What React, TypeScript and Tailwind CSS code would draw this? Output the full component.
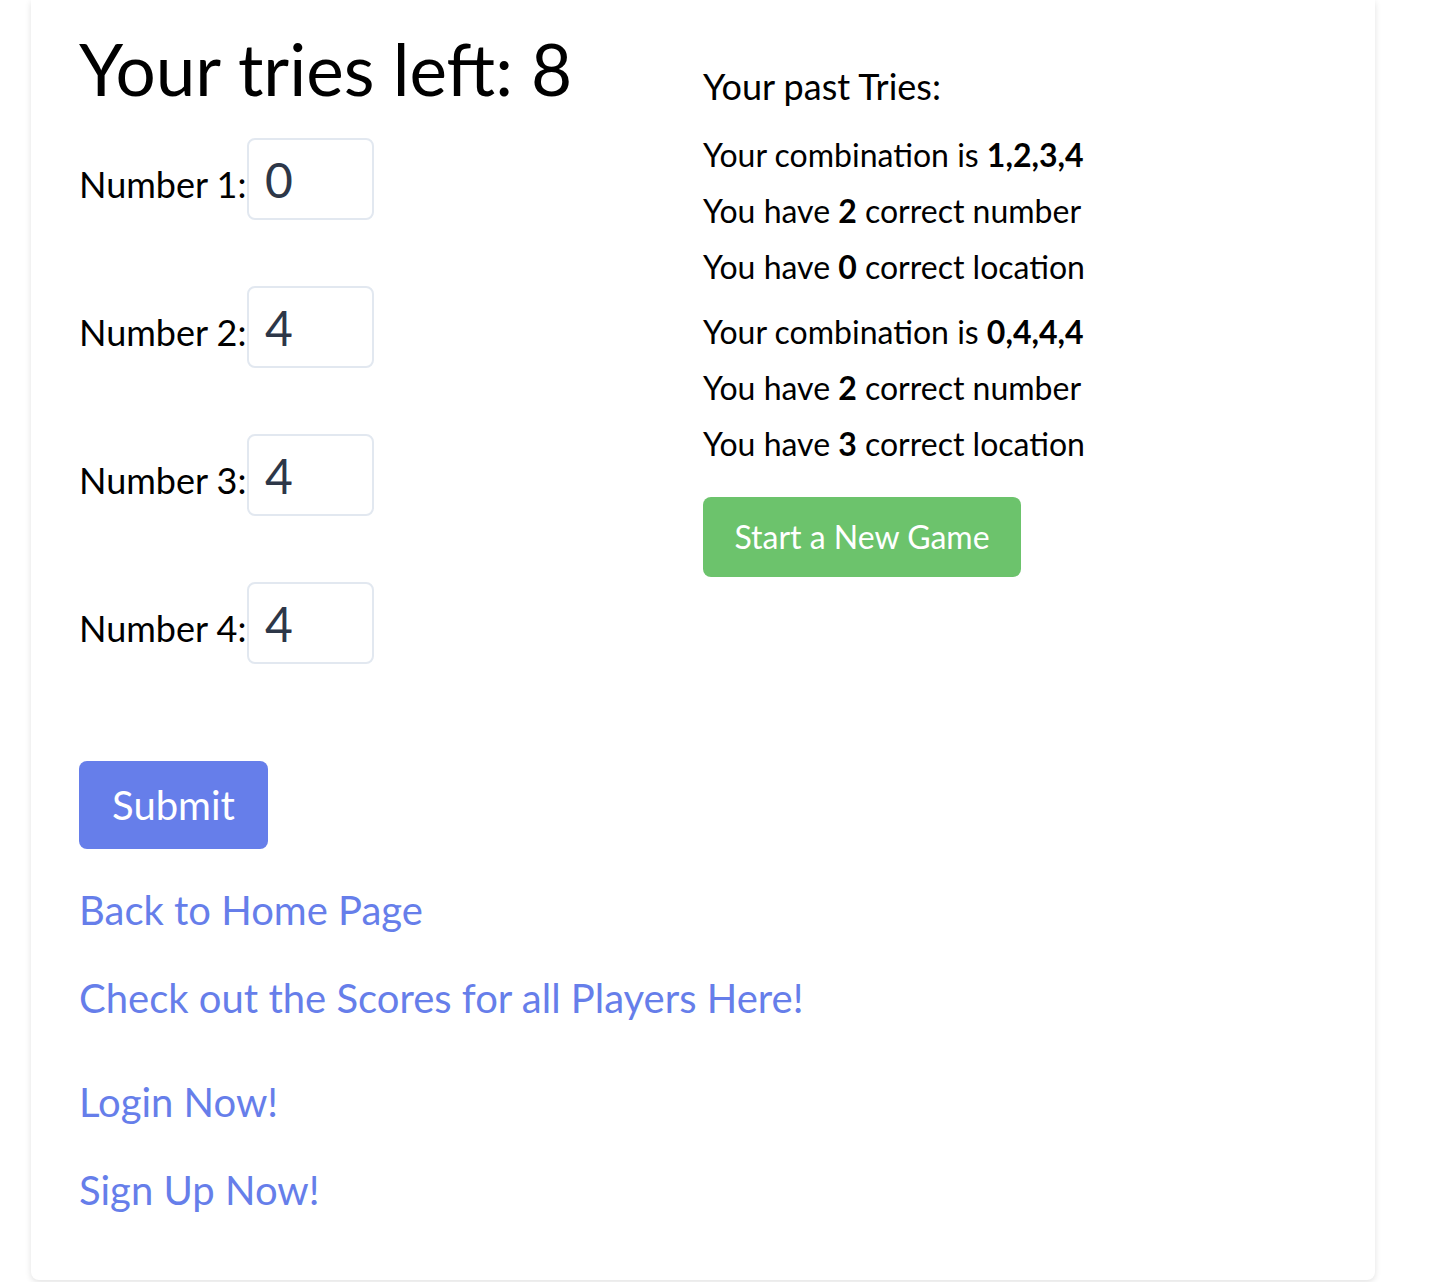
const pastTries = [
  { combo: "1,2,3,4", numbers: 2, locations: 0 },
  { combo: "0,4,4,4", numbers: 2, locations: 3 },
];

const guesses = ["0", "4", "4", "4"];

const links = [
  { label: "Back to Home Page", mt: "mt-[33px]" },
  { label: "Check out the Scores for all Players Here!", mt: "mt-[31px]" },
  { label: "Login Now!", mt: "mt-[47px]" },
  { label: "Sign Up Now!", mt: "mt-[31px]" },
];

const App = () => {
  return (
    <div className="bg-white min-h-[1282px] font-['Lato','Noto_Sans',sans-serif]">
      <div className="ml-[31px] w-[1344px] bg-white rounded-b-lg shadow-[0_2px_6px_rgba(0,0,0,0.12)] px-12 pt-[33px] pb-[61px]">
        <div className="grid grid-cols-2">
          <div>
            <h1 className="text-[71px] leading-none text-black">Your tries left: 8</h1>
            <form className="flex flex-col">
              {guesses.map((g, i) => (
                <div
                  key={i}
                  className={`flex items-baseline ${i === 0 ? "mt-[34px]" : "mt-[66px]"}`}
                >
                  <label className="w-[168px] text-[36px] text-black">Number {i + 1}:</label>
                  <input
                    defaultValue={g}
                    className="w-[127px] h-[82px] border-2 border-[#e2e8f0] rounded-lg px-4 text-[48px] text-[#2d3748] outline-none"
                  />
                </div>
              ))}
              <button
                type="button"
                className="mt-[97px] w-[189px] h-[88px] rounded-lg bg-[#667eea] text-white text-[40px]"
              >
                Submit
              </button>
            </form>
          </div>
          <div className="mt-[29px]">
            <p className="text-[36px] leading-[48px] text-black">Your past Tries:</p>
            <div className="mt-[17px]">
              {pastTries.map((t, i) => (
                <div key={i} className={i > 0 ? "mt-[9px]" : ""}>
                  <p className="text-[32px] leading-[56px] text-black">
                    Your combination is <span className="font-bold">{t.combo}</span>
                  </p>
                  <p className="text-[32px] leading-[56px] text-black">
                    You have <span className="font-bold">{t.numbers}</span> correct number
                  </p>
                  <p className="text-[32px] leading-[56px] text-black">
                    You have <span className="font-bold">{t.locations}</span> correct location
                  </p>
                </div>
              ))}
            </div>
            <button
              type="button"
              className="mt-[25px] w-[318px] h-[80px] rounded-lg bg-[#6cc36c] text-white text-[32px]"
            >
              Start a New Game
            </button>
          </div>
        </div>
        <div className="flex flex-col items-start">
          {links.map((l) => (
            <a
              key={l.label}
              href="#"
              className={`${l.mt} text-[40px] leading-[57px] text-[#667eea]`}
            >
              {l.label}
            </a>
          ))}
        </div>
      </div>
    </div>
  );
};

export default App;
